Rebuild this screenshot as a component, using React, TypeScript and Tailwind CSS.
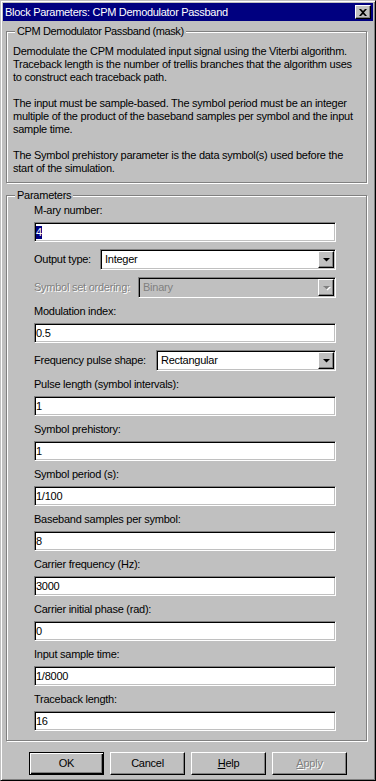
const sunken =
  'border border-t-[#808080] border-l-[#808080] border-r-white border-b-white shadow-[inset_1px_1px_0_#000,inset_-1px_-1px_0_#c0c0c0]'
const raised =
  'border border-t-white border-l-white border-r-black border-b-black shadow-[inset_-1px_-1px_0_#808080]'

const description = [
  'Demodulate the CPM modulated input signal using the Viterbi algorithm.',
  'Traceback length is the number of trellis branches that the algorithm uses',
  'to construct each traceback path.',
  '',
  'The input must be sample-based. The symbol period must be an integer',
  'multiple of the product of the baseband samples per symbol and the input',
  'sample time.',
  '',
  'The Symbol prehistory parameter is the data symbol(s) used before the',
  'start of the simulation.',
]

function Arrow({ disabled }: { disabled?: boolean }) {
  return (
    <svg width="9" height="6" viewBox="0 0 9 6">
      {disabled && <path d="M2 2h7L5.5 5.5z" fill="#fff" />}
      <path d="M1 1h7L4.5 4.5z" fill={disabled ? '#808080' : '#000'} />
    </svg>
  )
}

function Edit({ label, value, selected }: { label: string; value: string; selected?: boolean }) {
  return (
    <div className="flex flex-col">
      <div className="h-[13px] leading-[13px] whitespace-nowrap">{label}</div>
      <div className={`mt-[5px] h-[20px] bg-white flex items-center pl-[1px] ${sunken}`}>
        <span className={`leading-[13px] ${selected ? 'bg-[#000080] text-white' : ''}`}>{value}</span>
      </div>
    </div>
  )
}

function Combo({ label, value, labelWidth, disabled }: { label: string; value: string; labelWidth: string; disabled?: boolean }) {
  return (
    <div className="flex items-center h-[21px]">
      <div
        className={`${labelWidth} shrink-0 whitespace-nowrap leading-[13px] ${
          disabled ? 'text-[#808080] [text-shadow:1px_1px_0_#fff]' : ''
        }`}
      >
        {label}
      </div>
      <div className={`flex-1 h-[21px] flex p-[1px] ${sunken} ${disabled ? 'bg-[#c0c0c0]' : 'bg-white'}`}>
        <div className={`flex-1 flex items-center pl-[3px] leading-[13px] ${disabled ? 'text-[#808080]' : ''}`}>{value}</div>
        <div className={`w-[16px] h-full bg-[#c0c0c0] flex items-center justify-center ${raised}`}>
          <Arrow disabled={disabled} />
        </div>
      </div>
    </div>
  )
}

export default function App() {
  return (
    <div
      className="w-[376px] h-[781px] bg-[#c0c0c0] p-[2px] flex flex-col text-[11px] tracking-[-0.25px] text-black border border-t-[#c0c0c0] border-l-[#c0c0c0] border-r-black border-b-black shadow-[inset_1px_1px_0_#fff,inset_-1px_-1px_0_#808080]"
      style={{ fontFamily: '"Liberation Sans", Arial, sans-serif' }}
    >
      {/* title bar */}
      <div className="h-[18px] shrink-0 bg-[#000080] flex items-center justify-between pl-[2px] pr-[2px]">
        <span className="text-white leading-[13px] tracking-[-0.3px]">Block Parameters: CPM Demodulator Passband</span>
        <div className={`w-[16px] h-[14px] bg-[#c0c0c0] flex items-center justify-center ${raised}`}>
          <svg width="8" height="7" viewBox="0 0 8 7">
            <path d="M0 0h2l2 2 2-2h2L5 3.5 8 7H6L4 5 2 7H0l3-3.5z" fill="#000" />
          </svg>
        </div>
      </div>

      {/* description group */}
      <fieldset className="mt-[4px] ml-[3px] w-[361px] border border-[#808080] shadow-[inset_1px_1px_0_#fff,1px_1px_0_#fff]">
        <legend className="ml-[8px] px-[2px] leading-[13px] tracking-[-0.4px] bg-[#c0c0c0] whitespace-nowrap">
          CPM Demodulator Passband (mask)
        </legend>
        <div className="pt-[7px] pb-[7px] pl-[6px]">
          {description.map((line, i) => (
            <div key={i} className="h-[13px] leading-[13px] whitespace-nowrap">
              {line}
            </div>
          ))}
        </div>
      </fieldset>

      {/* parameters group */}
      <fieldset className="mt-[6px] ml-[3px] w-[361px] border border-[#808080] shadow-[inset_1px_1px_0_#fff,1px_1px_0_#fff]">
        <legend className="ml-[8px] px-[2px] leading-[13px] bg-[#c0c0c0] whitespace-nowrap">Parameters</legend>
        <div className="pt-[2px] pb-[9px] pl-[27px] pr-[30px] flex flex-col gap-[7px]">
          <Edit label="M-ary number:" value="4" selected />
          <Combo label="Output type:" value="Integer" labelWidth="w-[66px]" />
          <Combo label="Symbol set ordering:" value="Binary" labelWidth="w-[104px]" disabled />
          <Edit label="Modulation index:" value="0.5" />
          <Combo label="Frequency pulse shape:" value="Rectangular" labelWidth="w-[122px]" />
          <Edit label="Pulse length (symbol intervals):" value="1" />
          <Edit label="Symbol prehistory:" value="1" />
          <Edit label="Symbol period (s):" value="1/100" />
          <Edit label="Baseband samples per symbol:" value="8" />
          <Edit label="Carrier frequency (Hz):" value="3000" />
          <Edit label="Carrier initial phase (rad):" value="0" />
          <Edit label="Input sample time:" value="1/8000" />
          <Edit label="Traceback length:" value="16" />
        </div>
      </fieldset>

      {/* buttons */}
      <div className="mt-[11px] pl-[26px] flex gap-[6px]">
        <button className="w-[75px] h-[23px] bg-[#c0c0c0] border border-black shadow-[inset_1px_1px_0_#fff,inset_-1px_-1px_0_#000,inset_-2px_-2px_0_#808080] leading-[13px]">
          OK
        </button>
        <button className={`w-[75px] h-[23px] bg-[#c0c0c0] leading-[13px] ${raised}`}>Cancel</button>
        <button className={`w-[75px] h-[23px] bg-[#c0c0c0] leading-[13px] ${raised}`}>
          <span className="underline">H</span>elp
        </button>
        <button className={`w-[75px] h-[23px] bg-[#c0c0c0] leading-[13px] text-[#808080] [text-shadow:1px_1px_0_#fff] ${raised}`}>
          <span className="underline">A</span>pply
        </button>
      </div>
    </div>
  )
}
